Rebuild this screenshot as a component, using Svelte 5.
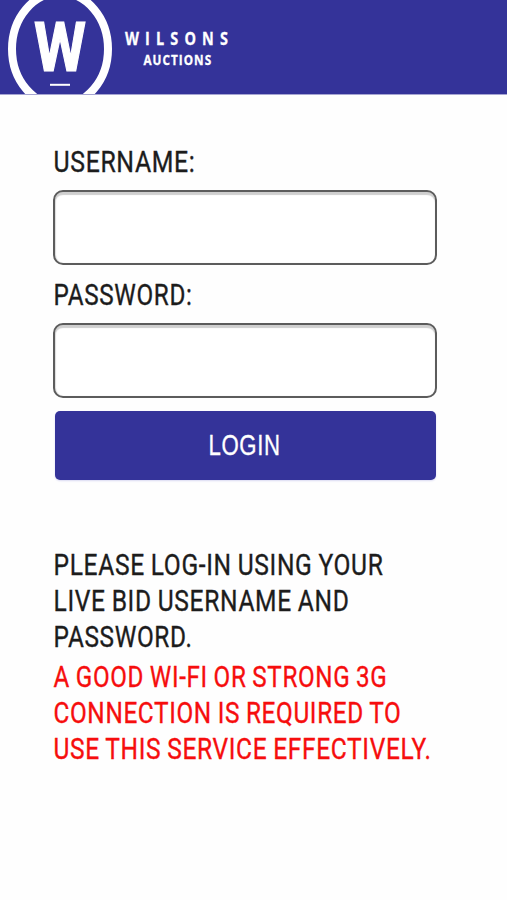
<script lang="ts">
	type Line = { text: string; width: number };

	const info: Line[] = [
		{ text: 'PLEASE LOG-IN USING YOUR', width: 330 },
		{ text: 'LIVE BID USERNAME AND', width: 296 },
		{ text: 'PASSWORD.', width: 139 }
	];

	const warning: Line[] = [
		{ text: 'A GOOD WI-FI OR STRONG 3G', width: 334 },
		{ text: 'CONNECTION IS REQUIRED TO', width: 348 },
		{ text: 'USE THIS SERVICE EFFECTIVELY.', width: 378 }
	];

	let username = $state('');
	let password = $state('');
</script>

<!-- One line of condensed text, fitted to its width -->
{#snippet fitted(text: string, width: number)}
	<svg class="fitted" width={width + 4} height="36" role="img" aria-label={text}>
		<text x="0.5" y="29" textLength={width} lengthAdjust="spacingAndGlyphs">{text}</text>
	</svg>
{/snippet}

<div class="page">
	<header>
		<svg class="logo" width="250" height="94" viewBox="0 0 250 94" role="img" aria-label="Wilsons Auctions">
			<ellipse cx="60" cy="49" rx="48" ry="56.5" />
			<text class="mark" x="34" y="71.2" textLength="52" lengthAdjust="spacingAndGlyphs">W</text>
			<rect x="50" y="83.8" width="20" height="2" />
			<text class="name" transform="translate(125 45.3) scale(0.78 1)" textLength="140">WILSONS</text>
			<text class="sub" transform="translate(143.5 65.3) scale(0.84 1)" textLength="82">AUCTIONS</text>
		</svg>
	</header>

	<main>
		<form onsubmit={(e) => e.preventDefault()}>
			<label for="username">{@render fitted('USERNAME:', 142)}</label>
			<input id="username" type="text" bind:value={username} />
			<label for="password">{@render fitted('PASSWORD:', 139)}</label>
			<input id="password" type="password" bind:value={password} />
			<button type="submit">{@render fitted('LOGIN', 72)}</button>
		</form>

		<div class="message">
			{#each info as line}
				{@render fitted(line.text, line.width)}
			{/each}
		</div>
		<div class="message warning">
			{#each warning as line}
				{@render fitted(line.text, line.width)}
			{/each}
		</div>
	</main>
</div>

<style>
	:global(body) {
		background: #fefefe;
	}

	.page {
		height: 900px;
		overflow: hidden;
		font-family: Roboto, 'Liberation Sans', sans-serif;
		color: #1c1c1c;
	}

	header {
		height: 94px;
		background: #343399;
		border-bottom: 1px solid #a6a5d2;
	}

	.logo {
		display: block;
		fill: #fff;
		font-weight: 700;
	}

	.logo ellipse {
		fill: none;
		stroke: #fff;
		stroke-width: 8;
	}

	.mark {
		font-size: 69px;
		stroke: #fff;
		stroke-width: 1.2;
	}

	.name,
	.sub {
		font-family: 'Open Sans', sans-serif;
		stroke: #fff;
		stroke-width: 0.3;
	}

	/* textLength spreads the letters, the last one keeps its gap */
	.name {
		font-size: 18.5px;
		letter-spacing: 8px;
	}

	.sub {
		font-size: 14px;
		letter-spacing: 1.5px;
	}

	main {
		padding: 48px 70px 0 53px;
	}

	form {
		display: flex;
		flex-direction: column;
	}

	.fitted {
		display: block;
		overflow: visible;
		fill: currentColor;
		stroke: currentColor;
		stroke-width: 0.35;
		font-size: 30px;
		letter-spacing: 0.8px;
		word-spacing: -1px;
	}

	label {
		height: 47px;
	}

	input {
		box-sizing: border-box;
		width: 384px;
		height: 75px;
		margin: 0 0 11px;
		padding: 0 14px;
		border: 2px solid #5c5c5c;
		border-radius: 10px;
		background: #fff;
		box-shadow: inset 0 3px 1px #cfcfcf, inset 1px 0 1px #ddd;
		font: 28px Roboto, sans-serif;
		outline: none;
	}

	#password {
		margin-bottom: 13px;
	}

	button {
		display: flex;
		justify-content: center;
		width: 381px;
		height: 69px;
		margin: 0 0 0 1.5px;
		padding: 15px 0 0 2px;
		border: 0;
		border-radius: 5px;
		background: #343399;
		box-shadow: 0 1px 2px #d9d9f2;
		color: #fff;
		cursor: pointer;
	}

	form + .message {
		margin-top: 66px;
	}

	.message + .message {
		margin-top: 4px;
	}

	.warning {
		color: #f60d0d;
	}
</style>
